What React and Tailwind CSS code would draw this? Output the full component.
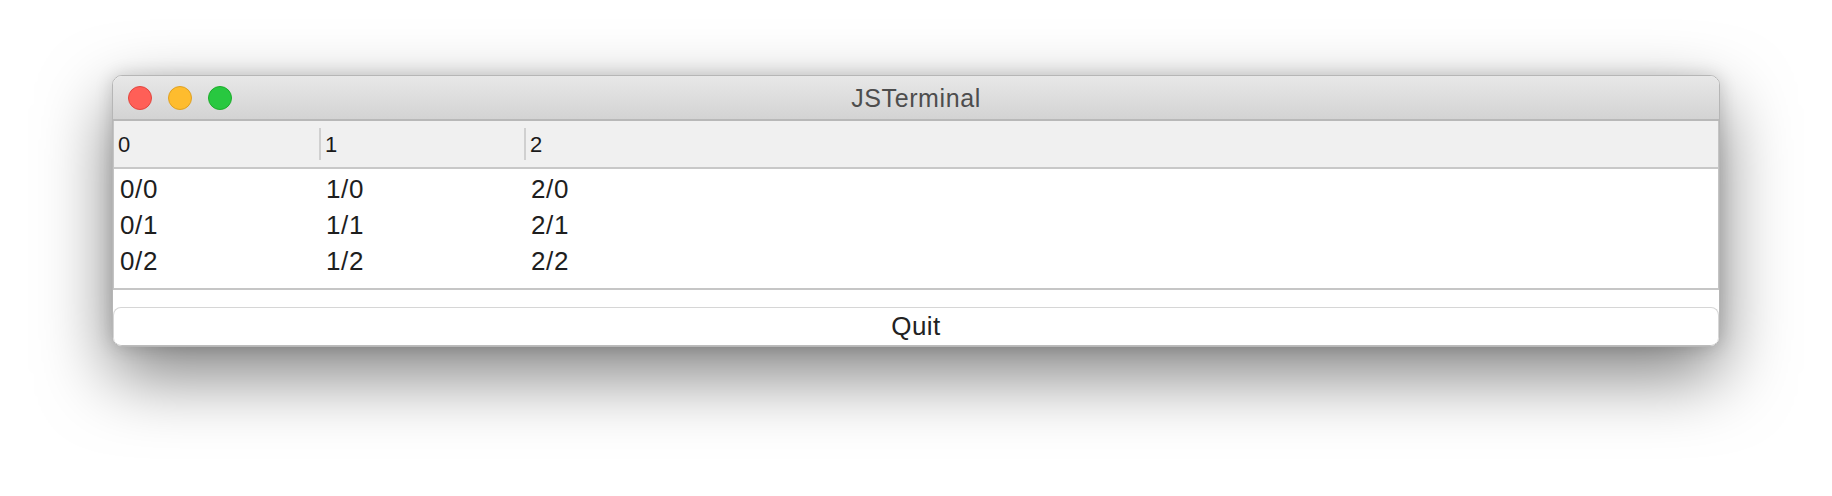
const columns = [0, 1, 2];
const rows = [0, 1, 2];

const TrafficLights = () => (
  <div className="flex items-center gap-4 pl-[15px]">
    <span className="w-6 h-6 rounded-full bg-[#ff5f57] border border-[#e2463f]" />
    <span className="w-6 h-6 rounded-full bg-[#febc2e] border border-[#dfa123]" />
    <span className="w-6 h-6 rounded-full bg-[#28c840] border border-[#1dad2b]" />
  </div>
);

const App = () => {
  return (
    <div
      className="w-full h-[496px] bg-white overflow-hidden pt-[75px] pl-[112px]"
      style={{ fontFamily: '"Liberation Sans", Arial, sans-serif' }}
    >
      <div className="w-[1608px] h-[272px] flex flex-col bg-white border border-[#b6b6b6] rounded-[10px] overflow-hidden shadow-[0_28px_70px_rgba(0,0,0,0.5),0_0_18px_rgba(0,0,0,0.16)]">
        {/* title bar */}
        <div className="relative h-[45px] shrink-0 flex items-center bg-gradient-to-b from-[#e8e8e8] to-[#d3d3d3] border-b-2 border-[#b8b8b8]">
          <TrafficLights />
          <div className="absolute inset-0 flex items-center justify-center pt-[2px] text-[25px] tracking-[0.6px] text-[#4d4d4d]">
            JSTerminal
          </div>
        </div>

        {/* table */}
        <div className="shrink-0 flex flex-col border-x border-[#c4c4c4] border-b-2 border-b-[#c6c6c6]">
          <div className="h-[48px] shrink-0 flex bg-[#f0f0f0] border-b-2 border-[#c8c8c8]">
            {columns.map((c) => (
              <div
                key={c}
                className={`w-[205px] flex items-center text-[22px] text-[#1a1a1a] ${
                  c === 0 ? "pl-[4px]" : "pl-[4px] border-l-2 border-[#d0d0d0] my-[7px]"
                }`}
              >
                {c}
              </div>
            ))}
          </div>
          <div className="pt-[2px] pb-[9px] bg-white">
            {rows.map((r) => (
              <div key={r} className="h-[36px] flex text-[26px] leading-[36px] tracking-[0.6px] text-[#1e1e1e]">
                {columns.map((c) => (
                  <div key={c} className={`w-[205px] ${c === 0 ? "pl-[6px]" : "pl-[7px]"}`}>
                    {c}/{r}
                  </div>
                ))}
              </div>
            ))}
          </div>
        </div>

        <div className="flex-1" />

        {/* quit button */}
        <button className="h-[39px] shrink-0 rounded-[8px] bg-white border border-[#d6d6d6] border-b-[#bcbcbc] text-[26px] tracking-[0.4px] text-[#222222] flex items-center justify-center">
          Quit
        </button>
      </div>
    </div>
  );
};

export default App;
